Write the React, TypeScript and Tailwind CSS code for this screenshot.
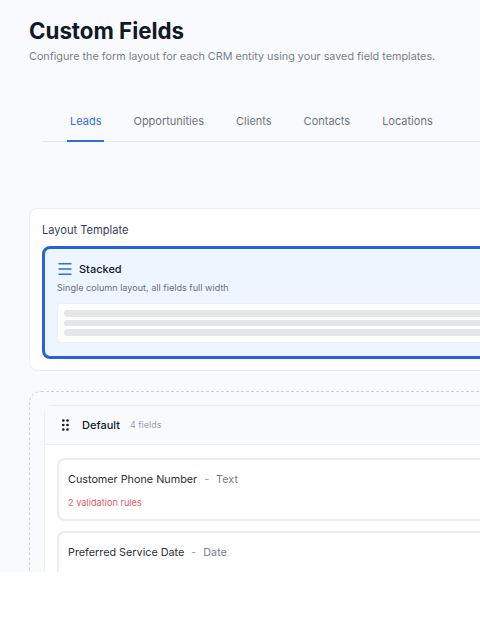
import { Menu } from 'lucide-react';

const font = { fontFamily: 'Inter, sans-serif' };

const tabs = ['Leads', 'Opportunities', 'Clients', 'Contacts', 'Locations'];

function GripIcon() {
  return (
    <svg width="7" height="12" viewBox="0 0 7 12" fill="#111827">
      {[1.5, 6, 10.5].map((y) => (
        <g key={y}>
          <circle cx="1.3" cy={y} r="1.3" />
          <circle cx="5.5" cy={y} r="1.3" />
        </g>
      ))}
    </svg>
  );
}

function FieldCard({ name, type, rules }: { name: string; type: string; rules?: string }) {
  return (
    <div className="h-[63px] shrink-0 rounded-lg border-2 border-[#ebecee] bg-white pl-[9px] pt-[11.5px]">
      <div className="flex items-center text-[10.8px] leading-[16px] text-[#2b3038]">
        <span>{name}</span>
        <span className="ml-[7px] text-[#9ca3af]">-</span>
        <span className="ml-[7px] text-[#7b8088]">{type}</span>
      </div>
      {rules && <div className="mt-[8px] text-[9.2px] leading-[14px] text-[#e9596a]">{rules}</div>}
    </div>
  );
}

export default function App() {
  return (
    <div className="h-[572px] w-[480px] overflow-hidden bg-[#f9fafd]" style={font}>
      <div className="w-[620px] pl-[29px]">
        {/* Header */}
        <h1 className="pt-[16px] text-[22.3px] font-bold leading-[30px] text-[#111827]">Custom Fields</h1>
        <p className="mt-[3px] text-[10.8px] leading-[16px] text-[#7b7f88]">
          Configure the form layout for each CRM entity using your saved field templates.
        </p>

        {/* Tabs */}
        <div className="ml-[13px] mt-[40px] flex h-[37px] gap-[26px] border-b border-[#e8eaee] pl-[25px]">
          {tabs.map((t, i) => (
            <div
              key={t}
              className={
                i === 0
                  ? '-mb-px border-b-2 border-[#2f6fd8] px-[3px] pt-[8px] text-[11px] leading-[16px] text-[#2f6fd8]'
                  : 'px-[3px] pt-[8px] text-[11px] leading-[16px] text-[#6f747c]'
              }
            >
              {t}
            </div>
          ))}
        </div>

        {/* Layout template */}
        <div className="mt-[66px] h-[163px] rounded-lg border border-[#eceef1] bg-white pl-[12px] pt-[13px]">
          <div className="text-[11.1px] leading-[16px] text-[#374151]">Layout Template</div>
          <div className="mt-[8px] h-[113px] rounded-lg border-[3px] border-[#2563d8] bg-[#edf5fe] pl-[12px] pt-[11px]">
            <div className="flex items-center">
              <Menu size={18} strokeWidth={1.75} className="-ml-px text-[#2f6fd8]" />
              <span className="ml-[5px] text-[11px] font-medium leading-[16px] text-[#111827]">Stacked</span>
            </div>
            <div className="mt-[3px] text-[9.1px] leading-[14px] text-[#6b7280]">Single column layout, all fields full width</div>
            <div className="mt-[8px] flex h-[40px] flex-col gap-[3px] rounded border border-[#eef0f3] bg-white px-[6px] pt-[6px]">
              <div className="h-[6.5px] rounded-full bg-[#e5e6e8]" />
              <div className="h-[6.5px] rounded-full bg-[#e5e6e8]" />
              <div className="h-[6.5px] rounded-full bg-[#e5e6e8]" />
            </div>
          </div>
        </div>

        {/* Section drop zone */}
        <div className="mt-[20px] rounded-xl border-[1.5px] border-dashed border-[#cfd3d8] pl-[14px] pt-[13px]">
          <div className="rounded-lg border border-[#eceef1] bg-white">
            <div className="flex h-[39px] items-center border-b border-[#eceef1] bg-[#f8fafc] pl-[17px]">
              <GripIcon />
              <span className="ml-[13px] text-[11px] font-medium text-[#111827]">Default</span>
              <span className="ml-[10px] text-[9px] text-[#9ca3af]">4 fields</span>
            </div>
            <div className="flex flex-col gap-[10px] pl-[12px] pt-[13px]">
              <FieldCard name="Customer Phone Number" type="Text" rules="2 validation rules" />
              <FieldCard name="Preferred Service Date" type="Date" />
            </div>
          </div>
        </div>
      </div>
    </div>
  );
}
